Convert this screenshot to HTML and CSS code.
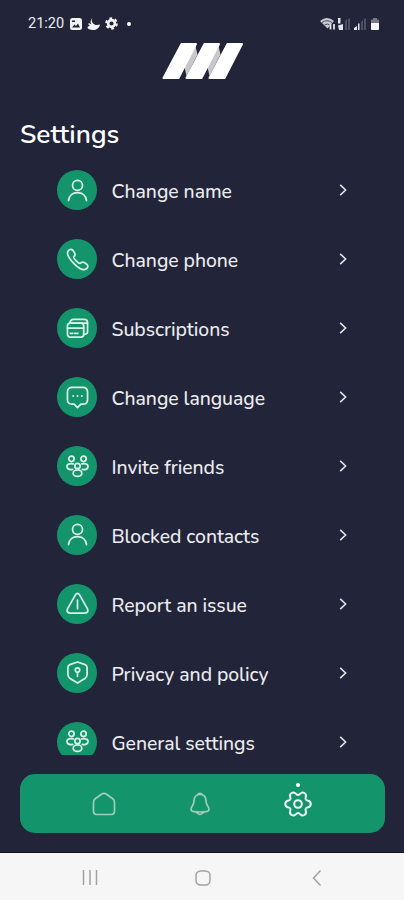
FILE: index.html
```html
<!DOCTYPE html>
<html lang="en">
<head>
    <meta charset="UTF-8">
    <meta name="viewport" content="width=device-width, initial-scale=1.0">
    <link rel="stylesheet" href="styles.css">
    <title>Settings</title>
</head>
<body>
    <!-- icons used more than once -->
    <svg class="sprite" width="0" height="0">
        <symbol id="user" viewBox="0 0 24 24"><circle cx="12" cy="6.700" r="5.200"/><path d="M2.600 22.500c.6-5.400 4.700-8.200 9.400-8.200s8.800 2.800 9.400 8.200"/></symbol>
        <symbol id="people" viewBox="0 0 24 24"><circle cx="5.700" cy="4" r="2.800"/><circle cx="18.300" cy="4" r="2.800"/><circle cx="12" cy="11.500" r="2.800"/><ellipse cx="12" cy="19" rx="4.500" ry="3.400"/><path d="M7 15c-3 .6-6-.3-6-3 0-2 2-3 4.500-3 .8 0 1.500.1 2 .3M17 15c3 .6 6-.3 6-3 0-2-2-3-4.500-3-.8 0-1.500.1-2 .3"/></symbol>
        <symbol id="arrow" viewBox="0 0 8 12"><path d="M1.200.8L6.600 6l-5.400 5.200"/></symbol>
    </svg>

    <div class="status-bar">
        <div class="status-left">
            <span class="time">21:20</span>
            <svg width="12" height="12" viewBox="0 0 12 12"><rect width="12" height="12" rx="2.500" fill="#f4f4f6"/><path d="M2 9.500l2.500-3L6 8l2-2.500 2 4z" fill="#222439"/><path d="M2 2.500h3v1.500H2z" fill="#222439"/></svg>
            <svg width="13" height="12" viewBox="0 0 13 12"><path d="M5.500 0C4 2.500 5 5 7.200 6.200 9 7.500 11 7 13 6.500c-.5 3.500-3.500 5.500-7 5.500C3 12 .5 11 .5 9.500c0-1 1-1.500 2.500-1.500C1.500 6.500 1 6 1.500 5.500S3.500 6 4.500 6.500C3 4 3.500 2 5.500 0z" fill="#f4f4f6"/></svg>
            <svg width="13" height="13" viewBox="0 0 13 13"><circle cx="6.500" cy="6.500" r="3.400" fill="none" stroke="#f4f4f6" stroke-width="2.600"/><circle cx="6.500" cy="6.500" r="5.300" fill="none" stroke="#f4f4f6" stroke-width="2" stroke-dasharray="2.800 2.750"/></svg>
            <span class="more-dot"></span>
        </div>
        <svg class="status-right" width="60" height="14" viewBox="0 0 60 14">
            <path d="M0 4q7-6 14 0l-6.500 7.500z" fill="#c9cbd3"/>
            <path d="M2 5.500q5-3.500 10 0M4.500 8q2.800-2 5.500 0" fill="none" stroke="#474a5d"/>
            <path d="M10.500 7v5.500M14 7v5.500" stroke="#e4e5ea" stroke-width="1.800"/>
            <path d="M18 1h2.500v5.500H18zM18 8.500l5-1.500v6h-4z" fill="#e4e5ea"/>
            <path d="M25 4l2-2v11h-2zM28 2l2-1v12h-2zM41 5l2-2v10h-2zM44 2l2-1v12h-2z" fill="#4e5163"/>
            <path d="M34 13v-2l3-2v4zM38 6.500h1.500V13H38z" fill="#e4e5ea"/>
            <path d="M53 1h4v1.500h2V7h-8V2.500h2z" fill="#777987"/>
            <path d="M51 6h8v6q0 1-1 1h-6q-1 0-1-1z" fill="#f8f8f8"/>
        </svg>
    </div>

    <div class="logo">
        <svg width="82" height="38" viewBox="0 0 82 38">
            <path d="M33.500 4l2 8.500L24.500 34l-2-9zM56.500 4l2 8.500L47.500 34l-2-9z" fill="#c8c8ca"/>
            <g fill="#fff" stroke="#fff" stroke-width="2" stroke-linejoin="round"><path d="M19.500 2H34L16.500 36H1.500zM42.500 2H57L39.500 36h-15zM65.500 2H80L62.500 36h-15z"/></g>
        </svg>
    </div>

    <h1 class="title">Settings</h1>

    <div class="menu">
        <a class="menu-item"><span class="icon"><svg><use href="#user"/></svg></span><span class="label">Change name</span><svg class="arrow"><use href="#arrow"/></svg></a>
        <a class="menu-item"><span class="icon"><svg viewBox="0 0 24 24"><path d="M2.500 2.700C4 .8 6.300.9 7.500 2.800l1.700 2.800c.8 1.500 0 2.500-1 3.500-1.200 1.300 5.400 8 6.800 6.800 1-1 2-1.800 3.500-1l2.800 1.700c1.900 1.200 2 3.500.1 5-3 2.400-7.200.3-12.300-4.600C4 12-.5 6.500 2.500 2.700z"/></svg></span><span class="label">Change phone</span><svg class="arrow"><use href="#arrow"/></svg></a>
        <a class="menu-item"><span class="icon"><svg viewBox="0 0 24 24"><rect x="1.500" y="6.500" width="17" height="14.500" rx="3"/><path d="M1.500 11.500h17M4.500 17h2.500M9 17h3.500M4 6.500C4.300 3.500 5.500 2.500 8 2.500h11c2.500 0 3.500 1 3.500 3.500v9c0 2-1.500 3-4 3M5 6.300h17.500"/></svg></span><span class="label">Subscriptions</span><svg class="arrow"><use href="#arrow"/></svg></a>
        <a class="menu-item"><span class="icon"><svg viewBox="0 0 24 24"><path d="M6.500 1.500h11q5 0 5 5v7.500q0 5-5 5h-2L12 22.500 8.500 19h-2q-5 0-5-5V6.500q0-5 5-5z"/><path class="dots" d="M7.500 10.500h.1M12 10.500h.1M16.500 10.500h.1"/></svg></span><span class="label">Change language</span><svg class="arrow"><use href="#arrow"/></svg></a>
        <a class="menu-item"><span class="icon"><svg><use href="#people"/></svg></span><span class="label">Invite friends</span><svg class="arrow"><use href="#arrow"/></svg></a>
        <a class="menu-item"><span class="icon"><svg><use href="#user"/></svg></span><span class="label">Blocked contacts</span><svg class="arrow"><use href="#arrow"/></svg></a>
        <a class="menu-item"><span class="icon"><svg viewBox="0 0 24 24"><path d="M9.700 3.200q2.300-3.700 4.600 0l8 14.200q1.700 4.100-2.500 4.600H4.200Q0 21.500 1.700 17.400zM12 8.500v9"/></svg></span><span class="label">Report an issue</span><svg class="arrow"><use href="#arrow"/></svg></a>
        <a class="menu-item"><span class="icon"><svg viewBox="0 0 24 24"><path d="M12 1l8 2.800q2 .8 2 3V14q0 2.500-2.300 4.300L12 23l-7.700-4.700Q2 16.500 2 14V6.800q0-2.200 2-3zM12 12v4"/><circle cx="12" cy="9.500" r="2.300"/></svg></span><span class="label">Privacy and policy</span><svg class="arrow"><use href="#arrow"/></svg></a>
        <a class="menu-item"><span class="icon"><svg><use href="#people"/></svg></span><span class="label">General settings</span><svg class="arrow"><use href="#arrow"/></svg></a>
    </div>

    <div class="tab-bar">
        <svg class="tab" viewBox="0 0 24 24"><path d="M3.500 6.500l6-4.300q2.500-1.500 5 0l6 4.300q2 1.500 2 3.500v9q0 3.500-3.500 3.500H5Q1.500 22.500 1.500 19v-9q0-2 2-3.500z"/></svg>
        <svg class="tab" viewBox="0 0 24 24"><path d="M12 2.500C8 2.500 6 5 6 9c0 4-3 5.500-3 8.500 0 2 2 2.500 9 2.500s9-.5 9-2.500c0-3-3-4.500-3-8.500 0-4-2-6.500-6-6.500zM9.500 2.500q2.500-2.500 5 0M8.500 20.500q3.500 3.500 7 0"/></svg>
        <div class="tab active">
            <svg width="28" height="28" viewBox="0 0 28 28">
                <path id="tooth" d="M21.800 9.500C23.200 11.800 26.700 9.600 26.700 14S23.200 16.200 21.800 18.500"/>
                <use href="#tooth" transform="rotate(60 14 14)"/>
                <use href="#tooth" transform="rotate(120 14 14)"/>
                <use href="#tooth" transform="rotate(180 14 14)"/>
                <use href="#tooth" transform="rotate(240 14 14)"/>
                <use href="#tooth" transform="rotate(300 14 14)"/>
                <circle cx="14" cy="14" r="3.800"/>
            </svg>
        </div>
    </div>

    <div class="system-bar">
        <svg width="16" height="16" viewBox="0 0 16 16"><path d="M1.500 0v15M8 0v15M14.500 0v15"/></svg>
        <svg width="16" height="16" viewBox="0 0 16 16"><rect x="1" y="1" width="14" height="14" rx="4.500"/></svg>
        <svg width="16" height="16" viewBox="0 0 16 16"><path d="M12.500.5L5.500 8l7 7.500"/></svg>
    </div>
</body>
</html>
```

FILE: styles.css
```css
body {
    font-family: Nunito, Lato, sans-serif;
    margin: 0;
    height: 900px;
    overflow: hidden;
    display: flex;
    flex-direction: column;
    background-color: #222439;
    color: #ececef;
}

svg {
    display: block;
    flex: none;
}

.sprite {
    position: absolute;
}

.status-bar {
    height: 42px;
    padding: 5px 24px 0 28px;
    box-sizing: border-box;
    display: flex;
    justify-content: space-between;
    align-items: center;
}

.status-left {
    display: flex;
    align-items: center;
    gap: 5px;
}

.time {
    font: 400 14.5px Roboto, sans-serif;
    width: 37px;
}

.more-dot {
    width: 4px;
    height: 4px;
    margin-left: 4px;
    border-radius: 50%;
    background-color: white;
}

.logo {
    height: 38px;
    padding-left: 162px;
}

.title {
    margin: 35px 0 0 20px;
    height: 41px;
    line-height: 38px;
    font-size: 26.3px;
    font-weight: 600;
    color: white;
}

.menu {
    height: 599px;
    overflow: hidden;
}

.menu-item {
    display: flex;
    align-items: center;
    height: 68.9px;
    padding: 0 57px;
}

.icon {
    flex: none;
    display: flex;
    align-items: center;
    justify-content: center;
    width: 40px;
    height: 40px;
    margin-right: 14.5px;
    border-radius: 50%;
    background-color: #13946b;
}

.icon svg {
    width: 23px;
    height: 23px;
    fill: none;
    stroke: #d9f1e7;
    stroke-width: 1.8;
    stroke-linecap: round;
    stroke-linejoin: round;
}

.icon .dots {
    stroke-width: 2;
}

.label {
    flex: 1;
    padding-top: 4px;
    font-size: 19.4px;
    line-height: 22px;
    font-weight: 500;
    letter-spacing: -0.05px;
    white-space: nowrap;
}

.arrow {
    width: 8px;
    height: 12px;
    fill: none;
    stroke: #e0e0e5;
    stroke-width: 1.6;
}

.tab-bar {
    display: flex;
    align-items: center;
    height: 59px;
    margin: 19px 19px 0 20px;
    border-radius: 15px;
    background-color: #13946b;
}

.tab {
    width: 24px;
    height: 24px;
    margin-left: 72px;
    fill: none;
    stroke: #9fceba;
    stroke-width: 1.7;
}

.tab.active {
    position: relative;
    width: 28px;
    height: 28px;
    stroke: #f0faf6;
    stroke-width: 2;
}

.tab.active::before {
    content: "";
    position: absolute;
    top: -7px;
    left: 12px;
    width: 4px;
    height: 4px;
    border-radius: 50%;
    background-color: white;
}

.system-bar {
    display: flex;
    gap: 97px;
    margin-top: 19px;
    height: 45px;
    padding: 2px 0 0 82px;
    border-top: 1px solid #10121f;
    align-items: center;
    background-color: #f6f6f6;
}

.system-bar svg {
    fill: none;
    stroke: #a2a2a2;
    stroke-width: 1.5;
}
```
